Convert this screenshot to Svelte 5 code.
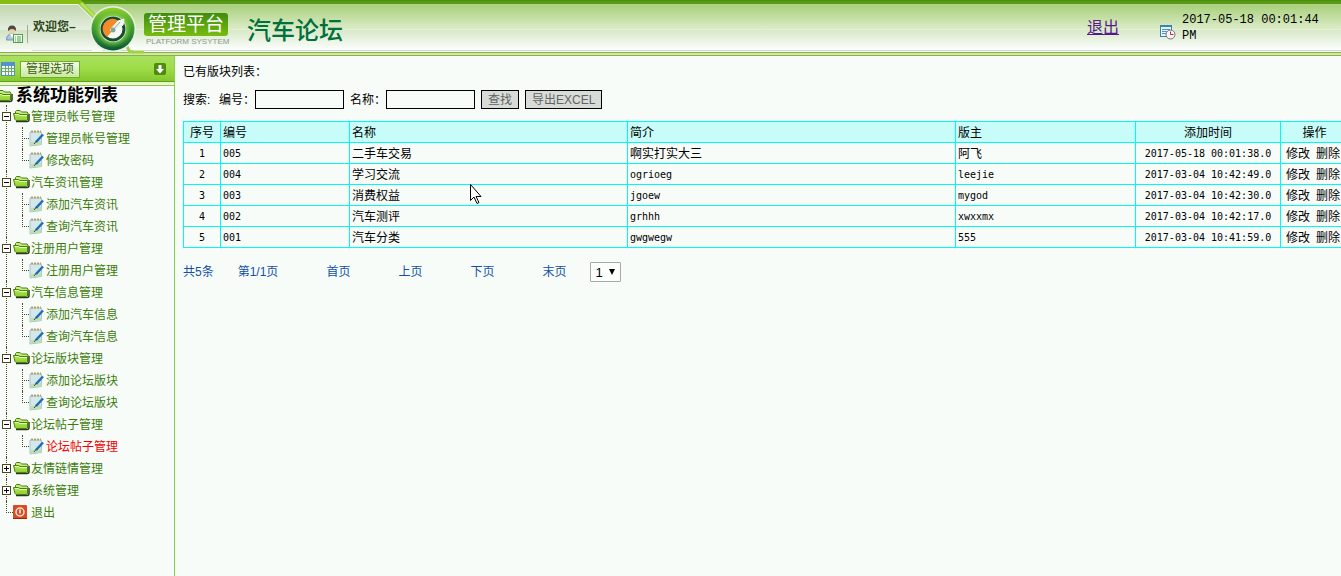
<script lang="ts">
  type Item = { label: string; active?: boolean };
  type Group = { label: string; open: boolean; items: Item[] };

  const groups: Group[] = [
    { label: '管理员帐号管理', open: true, items: [{ label: '管理员帐号管理' }, { label: '修改密码' }] },
    { label: '汽车资讯管理', open: true, items: [{ label: '添加汽车资讯' }, { label: '查询汽车资讯' }] },
    { label: '注册用户管理', open: true, items: [{ label: '注册用户管理' }] },
    { label: '汽车信息管理', open: true, items: [{ label: '添加汽车信息' }, { label: '查询汽车信息' }] },
    { label: '论坛版块管理', open: true, items: [{ label: '添加论坛版块' }, { label: '查询论坛版块' }] },
    { label: '论坛帖子管理', open: true, items: [{ label: '论坛帖子管理', active: true }] },
    { label: '友情链情管理', open: false, items: [] },
    { label: '系统管理', open: false, items: [] }
  ];

  const rows = [
    { code: '005', name: '二手车交易', intro: '啊实打实大三', owner: '阿飞', time: '2017-05-18 00:01:38.0' },
    { code: '004', name: '学习交流', intro: 'ogrioeg', owner: 'leejie', time: '2017-03-04 10:42:49.0' },
    { code: '003', name: '消费权益', intro: 'jgoew', owner: 'mygod', time: '2017-03-04 10:42:30.0' },
    { code: '002', name: '汽车测评', intro: 'grhhh', owner: 'xwxxmx', time: '2017-03-04 10:42:17.0' },
    { code: '001', name: '汽车分类', intro: 'gwgwegw', owner: '555', time: '2017-03-04 10:41:59.0' }
  ];

  const pages = ['首页', '上页', '下页', '末页'];

  let code = $state('');
  let name = $state('');
  let page = $state('1');

  function isLatin(s: string) {
    return /^[\x20-\x7e]+$/.test(s);
  }
</script>

{#snippet folder()}
  <svg class="folder" width="17" height="14" viewBox="0 0 17 14" aria-hidden="true">
    <path d="M3 12.500h11q2 0 2-2V5" fill="none" stroke="#2c3424" stroke-width="1.500" />
    <path d="M2.500 9V2.500l1-1h3.500l1.500 1.500h5.500l1 1V9z" fill="#c4ec80" stroke="#4c7a10" />
    <path d="M.5 4.500h5l1.500 1h7.500V11l-1 .5H3L2 10.500z" fill="url(#folderFill)" stroke="#4a8210" />
    <path d="M2 5.500h3.500l1 1H14" fill="none" stroke="#e4ffb4" />
  </svg>
{/snippet}

<div class="page">
  <header class="top">
    <div class="welcome">
      <svg class="swoosh" width="144" height="56" viewBox="0 0 144 56" aria-hidden="true">
        <defs>
          <linearGradient id="panelFill" x1="0" y1="0" x2="0" y2="1">
            <stop offset="0" stop-color="#bfd6ad" />
            <stop offset=".54" stop-color="#e6efdf" />
            <stop offset=".55" stop-color="#d2e2c6" />
            <stop offset="1" stop-color="#fafdf8" />
          </linearGradient>
          <linearGradient id="ringFill" x1="0" y1="0" x2="0" y2="1">
            <stop offset="0" stop-color="#90d02c" />
            <stop offset=".5" stop-color="#3c9c30" />
            <stop offset="1" stop-color="#0a5a34" />
          </linearGradient>
          <radialGradient id="faceFill">
            <stop offset=".6" stop-color="#a8e060" />
            <stop offset="1" stop-color="#58b030" stop-opacity="0" />
          </radialGradient>
          <linearGradient id="folderFill" x1="0" y1="0" x2="0" y2="1">
            <stop offset="0" stop-color="#b4ec50" />
            <stop offset="1" stop-color="#8ccc34" />
          </linearGradient>
        </defs>
        <path d="M0 4h78l14 14v20l12 14H0z" fill="url(#panelFill)" />
        <path d="M122 32l11 16q2 3 5 3h6" fill="none" stroke="#fff" stroke-width="3" />
        <path d="M122 38l8 14h14" fill="none" stroke="#9cd444" stroke-width="3" />
        <path d="M0 2h80l18 18" fill="none" stroke="#86bd10" stroke-width="4" />
        <path d="M81 3l16 16" stroke="#b4e458" stroke-width="3" />
        <path d="M0 4.500h78l16 16" fill="none" stroke="#f2fae8" />
        <path d="M32 50.500h60" stroke="#d8dcd6" />
        <circle cx="113" cy="29" r="23" fill="#e9efe6" />
        <circle cx="113" cy="29" r="21.500" fill="url(#ringFill)" />
        <circle cx="113" cy="29" r="19" fill="url(#faceFill)" />
        <circle cx="113" cy="29" r="13" fill="#f4f8f0" />
        <circle cx="113" cy="29" r="11" fill="none" stroke="#134d32" stroke-width="3" />
        <path d="M113 30L118 20.500A9.500 9.500 0 1 0 107 37z" fill="#f58a28" />
        <path d="M110 30l8-9 6-2-1 6-10 8z" fill="#f0f4ec" stroke="#fff" />
        <circle cx="113" cy="30" r="2.500" fill="#7fa894" />
        <path d="M113 30l7-8" stroke="#8ca898" />
      </svg>
      <svg class="user" width="17" height="19" viewBox="0 0 17 19" aria-hidden="true">
        <path d="M.5 15q0-6 5.500-6 5 0 5.500 6z" fill="#a8c8e4" stroke="#7896b4" />
        <path d="M4 9l2 4 2-4" fill="#fff" />
        <circle cx="6" cy="5" r="3.500" fill="#f0cda4" />
        <path d="M2 6q-.5-5.500 4-5.500T10 6Q8 3.500 5 4z" fill="#4a4a44" />
        <rect x="7.500" y="9.500" width="9" height="8" fill="#f4fff0" stroke="#4ea04a" />
        <path d="M9 12h1m1 0h4M9 14h1m1 0h4M9 16h1m1 0h4" stroke="#4ea04a" />
      </svg>
      <span class="hello">欢迎您–</span>
    </div>
    <div class="brand">
      <span class="badge">管理平台</span>
      <span class="sub">PLATFORM SYSYTEM</span>
    </div>
    <h1>汽车论坛</h1>
    <a class="logout" href="#logout">退出</a>
    <div class="clock">
      <svg width="16" height="15" viewBox="0 0 16 15" aria-hidden="true">
        <rect x=".5" y=".5" width="11" height="11" fill="#e6f4fc" stroke="#3a84b4" />
        <path d="M0 1h12" stroke="#3a84b4" stroke-width="2" />
        <path d="M2 4.500h8M2 6.500h5M2 8.500h4" stroke="#4c94bc" />
        <circle cx="10.500" cy="9.500" r="4.500" fill="#f4f4f8" stroke="#7a6e78" />
        <path d="M10.500 6.500v3h3" fill="none" stroke="#c8281e" />
      </svg>
      <time>2017-05-18 00:01:44<br />PM</time>
    </div>
  </header>

  <div class="body">
    <nav class="side">
      <div class="side-head">
        <svg width="14" height="14" viewBox="0 0 14 14" aria-hidden="true">
          <rect x=".5" y=".5" width="13" height="13" fill="#f2faff" stroke="#5a8ec0" />
          <rect x="1" y="1" width="12" height="3" fill="#4f94d4" />
          <path d="M1 6.500h12M1 9.500h12M4.500 4v9M7.500 4v9M10.500 4v9" stroke="#6ea86a" />
        </svg>
        <span class="option">管理选项</span>
        <button type="button" class="fold" aria-label="展开">
          <svg width="12" height="12" viewBox="0 0 12 12" aria-hidden="true">
            <path d="M4.500 2h3v4h2.500L6 10.500 2 6h2.500z" fill="#fff" />
          </svg>
        </button>
      </div>

      <div class="root">
        {@render folder()}
        <strong>系统功能列表</strong>
      </div>
      <ul class="tree">
        {#each groups as g}
          <li>
            <div class="row">
              <svg class="toggle" width="9" height="9" viewBox="0 0 9 9" aria-hidden="true">
                <rect x=".5" y=".5" width="8" height="8" fill="#fff" stroke="#4a4620" />
                <path d={g.open ? 'M2 4.500h5' : 'M2 4.500h5M4.500 2v5'} stroke="#000" />
              </svg>
              {@render folder()}
              <a href="#group">{g.label}</a>
            </div>
            {#if g.open}
              <ul class="children">
                {#each g.items as item}
                  <li class="row">
                    <svg class="note" width="15" height="17" viewBox="0 0 15 17" aria-hidden="true">
                      <path d="M1 2h11.500v12.500l-11.500 1.500z" fill="#d4e8ec" stroke="#a8c4c8" />
                      <path d="M1.500 12l11-1v3.500l-11 1z" fill="#bce0b0" />
                      <path d="M2 1.500h10" stroke="#b4a468" stroke-width="2" stroke-dasharray="2 1" />
                      <path d="M14 4.500L7 12" stroke="#1f6cb8" stroke-width="2.500" />
                      <path d="M7.500 11L5 14" stroke="#345" />
                    </svg>
                    <a href="#item" class:active={item.active}>{item.label}</a>
                  </li>
                {/each}
              </ul>
            {/if}
          </li>
        {/each}
        <li>
          <div class="row leaf">
            <svg class="power" width="14" height="14" viewBox="0 0 14 14" aria-hidden="true">
              <rect width="14" height="14" rx="1" fill="#dc4a22" />
              <path d="M0 13.500h14" stroke="#98280c" />
              <circle cx="7" cy="7" r="4" fill="none" stroke="#ffe8dc" stroke-width="1.500" />
              <path d="M7 4.500v4" stroke="#fff" stroke-width="1.500" />
            </svg>
            <a href="#exit">退出</a>
          </div>
        </li>
      </ul>
    </nav>

    <main>
      <p class="title">已有版块列表：</p>

      <form class="search" onsubmit={(e) => e.preventDefault()}>
        <span class="lead">搜索:</span>
        <label for="code">编号：</label>
        <input id="code" type="text" bind:value={code} />
        <label for="name" class="second">名称：</label>
        <input id="name" type="text" bind:value={name} />
        <button type="submit">查找</button>
        <button type="button">导出EXCEL</button>
      </form>

      <table>
        <colgroup>
          <col class="c-no" />
          <col class="c-code" />
          <col class="c-name" />
          <col />
          <col class="c-owner" />
          <col class="c-time" />
          <col class="c-op" />
        </colgroup>
        <thead>
          <tr>
            <th class="mid">序号</th>
            <th>编号</th>
            <th>名称</th>
            <th>简介</th>
            <th>版主</th>
            <th class="mid">添加时间</th>
            <th class="mid">操作</th>
          </tr>
        </thead>
        <tbody>
          {#each rows as r, i}
            <tr>
              <td class="mid latin">{i + 1}</td>
              <td class="latin">{r.code}</td>
              <td>{r.name}</td>
              <td class:latin={isLatin(r.intro)}>{r.intro}</td>
              <td class:latin={isLatin(r.owner)}>{r.owner}</td>
              <td class="mid latin">{r.time}</td>
              <td class="ops"><a href="#edit">修改</a><a href="#delete">删除</a></td>
            </tr>
          {/each}
        </tbody>
      </table>

      <div class="pager">
        <span>共5条</span>
        <span>第1/1页</span>
        <div class="links">
          {#each pages as p}
            <a href="#page">{p}</a>
          {/each}
        </div>
        <div class="jump">
          <select aria-label="页码" bind:value={page}>
            <option value="1">1</option>
          </select>
        </div>
      </div>
    </main>
  </div>

  <svg class="pointer" width="12" height="20" viewBox="0 0 12 20" aria-hidden="true">
    <path d="M.5.5v16l3.500-3.500 3 6.500 2-1-3-6h5z" fill="#fff" stroke="#000" />
  </svg>
</div>

<style>
  :global(body) {
    background: #f8fcf8;
  }
  .page {
    position: relative;
    display: flex;
    flex-direction: column;
    min-height: 100vh;
    overflow: hidden;
    font: 12px/16px 'Liberation Sans', 'Noto Sans CJK SC', sans-serif;
    color: #000;
  }
  .page a { text-decoration: none; }

  .top {
    display: flex;
    box-sizing: border-box;
    height: 56px;
    background: linear-gradient(
      #4c8c0c 0, #5ca018 3px, #4c8c14 4px, #b8d890 4px, #a8d07c 5px,
      #dcecc8 29px, #e8f4dc 30px, #d8e8c8 30px, #f8fcf8 48px,
      #fcfefc 50px, #d0d4d0 50px, #d0d4d0 51px, #f4f8f0 51px, #f4f8f0 52px,
      #8cb048 52px, #8cb048 53px, #d0e8a0 53px, #d0e8a0 55px, #8cb048 55px
    );
  }
  .welcome {
    position: relative;
    display: flex;
    flex: none;
    width: 144px;
  }
  .swoosh {
    position: absolute;
    top: 0;
    left: 0;
  }
  .user {
    position: relative;
    margin: 25px 4px 0 6px;
  }
  .hello {
    position: relative;
    height: 18px;
    margin-top: 19px;
    padding-left: 6px;
    font-weight: bold;
    color: #2c4818;
  }
  .hello::before {
    content: '';
    position: absolute;
    top: 6px;
    left: 0;
    height: 18px;
    border-left: 1px solid #a0ac98;
  }
  .brand {
    display: flex;
    flex-direction: column;
    flex: none;
    width: 84px;
    padding-top: 13px;
  }
  .badge {
    border-radius: 3px;
    background: linear-gradient(#3f8c10, #78bc10);
    font-size: 19px;
    line-height: 23px;
    text-align: center;
    color: #fff;
  }
  .sub {
    padding-left: 2px;
    font-size: 8px;
    line-height: 12px;
    white-space: nowrap;
    color: #909890;
  }
  h1 {
    margin: 14px auto 0 19px;
    font-size: 24px;
    line-height: 34px;
    font-weight: 500;
    color: #00703c;
  }
  .logout {
    margin: 17px 41px 0 0;
    font-size: 16px;
    line-height: 22px;
    color: #551a8b;
  }
  .page .logout { text-decoration: underline; }
  .clock {
    display: flex;
    gap: 6px;
    width: 181px;
    padding-top: 12px;
  }
  .clock svg { margin-top: 13px; }
  .clock time {
    font-family: 'Liberation Mono', monospace;
    white-space: nowrap;
  }

  .body {
    display: flex;
    flex: 1;
  }
  .side {
    flex: none;
    width: 174px;
    border-right: 1px solid #8cd050;
  }
  .side-head {
    display: flex;
    align-items: center;
    box-sizing: border-box;
    height: 30px;
    padding: 0 8px 4px 1px;
    background: linear-gradient(
      #a8e060 0, #a0dc48 12px, #84c830 25px, #60a018 25px, #60a018 26px,
      #e4f4c0 26px, #f0f8d8 29px, #90c850 29px
    );
  }
  .option {
    margin-left: 5px;
    padding: 0 5px;
    border: 1px solid #70b020;
    background: linear-gradient(#f4fce8, #c8e8a0);
    line-height: 15px;
    color: #3c6010;
  }
  .fold {
    display: flex;
    margin-left: auto;
    padding: 0;
    border: 0;
    border-radius: 2px;
    background: #4c8c10;
  }

  .root {
    display: flex;
    align-items: center;
    gap: 2px;
    height: 19px;
    margin-left: -4px;
    font-size: 17px;
    line-height: 19px;
  }
  .tree,
  .children {
    margin: 0;
    padding: 0;
    list-style: none;
  }
  .tree > li {
    margin-left: 6px;
    border-left: 1px dotted #4a4620;
  }
  .tree > li:last-child { border-color: transparent; }
  .row {
    display: flex;
    align-items: center;
    height: 22px;
  }
  .row a {
    padding-top: 1px;
    color: #3c7c0c;
  }
  .row a.active { color: #f00000; }
  .toggle {
    margin-left: -5px;
    margin-right: 2px;
  }
  .folder {
    flex: none;
    margin-right: 1px;
  }
  .children { margin-left: 15px; }
  .children .row {
    position: relative;
    gap: 2px;
    padding-left: 7px;
  }
  /* dotted connector from the branch to the icon */
  .children .row::before,
  .leaf::before {
    content: '';
    position: absolute;
    top: 0;
    left: 0;
    width: 6px;
    height: 11px;
    border-left: 1px dotted #4a4620;
    border-bottom: 1px dotted #4a4620;
  }
  .children .row:not(:last-child)::after {
    content: '';
    position: absolute;
    top: 11px;
    left: 0;
    height: 11px;
    border-left: 1px dotted #4a4620;
  }
  .leaf {
    position: relative;
    gap: 4px;
    padding-left: 6px;
  }
  .leaf::before { left: -1px; }

  main {
    flex: 1;
    min-width: 0;
    padding: 8px;
  }
  .title {
    margin: 0;
  }
  .search {
    display: flex;
    align-items: center;
    margin: 10px 0 12px;
  }
  .lead { width: 36px; }
  .second { margin-left: 6px; }
  .search input {
    box-sizing: border-box;
    width: 89px;
    height: 19px;
    border: 1px solid #000;
    background: transparent;
    font: inherit;
  }
  .search button {
    height: 19px;
    margin-left: 6px;
    padding: 0 6px;
    border: 1px solid #000;
    background: #d8dcd8;
    font: inherit;
    color: #606460;
  }

  table {
    width: calc(100% + 16px);
    table-layout: fixed;
    border-collapse: collapse;
  }
  .c-no { width: 37px; }
  .c-code { width: 129px; }
  .c-name { width: 278px; }
  .c-owner { width: 180px; }
  .c-time { width: 145px; }
  .c-op { width: 68px; }
  th,
  td {
    height: 19px;
    padding: 1px 2px 0;
    border: 1px solid #00f8f8;
    font-weight: normal;
    text-align: left;
    white-space: nowrap;
  }
  th { background: #c8fcf8; }
  .mid { text-align: center; }
  .latin {
    font-family: 'DejaVu Sans Mono', monospace;
    font-size: 10px;
  }
  .ops { padding-left: 5px; }
  .ops a { color: #000; }
  .ops a + a { margin-left: 6px; }

  .pager {
    display: flex;
    align-items: center;
    gap: 24px;
    margin-top: 14px;
    color: #1050a8;
  }
  .pager a { color: inherit; }
  .links {
    display: flex;
    gap: 48px;
    margin-left: 24px;
  }
  .jump {
    position: relative;
    display: flex;
  }
  .jump::after {
    content: '';
    position: absolute;
    top: 7px;
    right: 6px;
    border: 3px solid transparent;
    border-top: 6px solid #000;
    border-bottom: 0;
    pointer-events: none;
  }
  .jump select {
    width: 31px;
    height: 20px;
    padding: 0 4px;
    border: 1px solid #a8a8a8;
    border-radius: 1px;
    background: #fcfefc;
    appearance: none;
    font: 13px 'Liberation Sans', sans-serif;
    color: #000;
  }
  .pointer {
    position: absolute;
    top: 184px;
    left: 470px;
  }
</style>
